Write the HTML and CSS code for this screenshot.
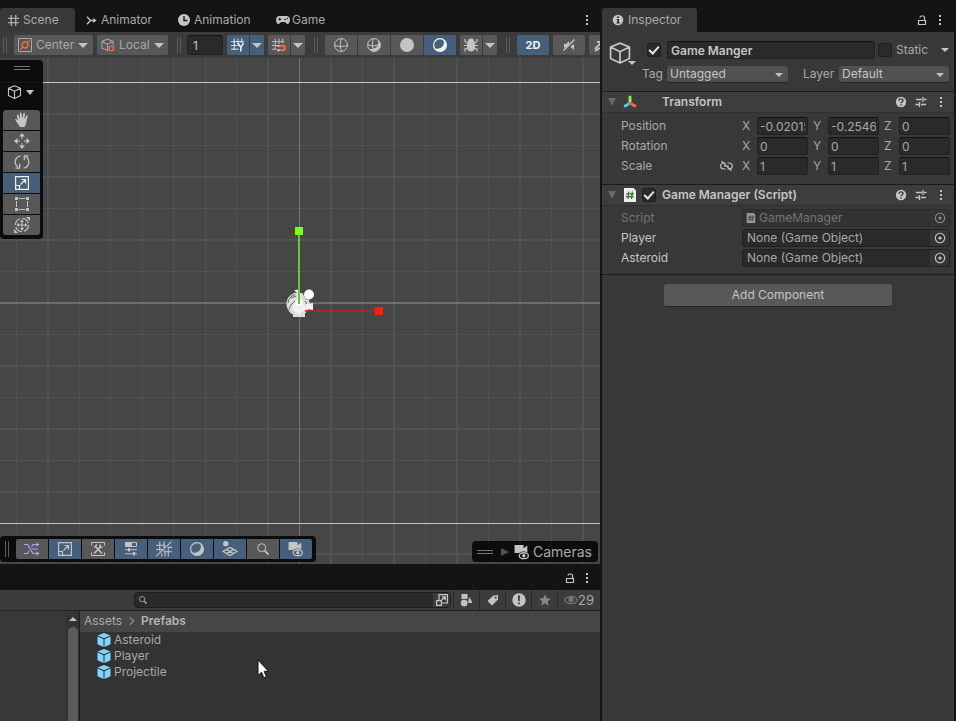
FILE: index.html
```html
<!DOCTYPE html>
<html lang="en">
<head>
<meta charset="utf-8">
<title>Scene editor</title>
<link rel="stylesheet" href="styles.css">
</head>
<body>
<svg class="defs" aria-hidden="true">
  <symbol id="i-grid" viewBox="0 0 12 12"><path d="M3.5 0v12M8.5 0v12M0 3.5h12M0 8.5h12" stroke="currentColor" fill="none" stroke-width="1.200"/></symbol>
  <symbol id="i-animator" viewBox="0 0 12 12"><path d="M1 2l4 4-4 4M5 6h5" stroke="currentColor" stroke-width="1.5" fill="none"/><path d="M8 3.2L11.5 6 8 8.8z" fill="currentColor"/></symbol>
  <symbol id="i-clock" viewBox="0 0 12 12"><circle cx="6" cy="6" r="6" fill="currentColor"/><path d="M6 2v4.5h3.5" stroke="#141414" stroke-width="1.4" fill="none"/></symbol>
  <symbol id="i-pad" viewBox="0 0 14 10"><path d="M3.5 1h7a3.5 3.5 0 0 1 3.4 4C13.7 7.500 13 9 11.600 9 10.300 9 9.700 7 8.500 7h-3C4.300 7 3.700 9 2.400 9 1 9 .3 7.500.1 5a3.500 3.500 0 0 1 3.400-4z" fill="currentColor"/><path d="M2.300 4.200h3M3.800 2.700v3" stroke="#141414"/><circle cx="9" cy="4.500" r=".8" fill="#141414"/><circle cx="11.300" cy="3.500" r=".8" fill="#141414"/></symbol>
  <symbol id="i-dots" viewBox="0 0 4 12"><path d="M1 1h2v2H1zM1 5h2v2H1zM1 9h2v2H1z" fill="currentColor"/></symbol>
  <symbol id="i-lock" viewBox="0 0 10 12"><path d="M1.500 6.500h7v4h-7zM7.500 6.500V3.500a1.500 1.500 0 0 0-1.500-1.500H4.500a1.500 1.500 0 0 0-1.500 1.500" stroke="currentColor" fill="none" stroke-width="1.200"/></symbol>
  <symbol id="i-info" viewBox="0 0 12 12"><circle cx="6" cy="6" r="5.300" fill="currentColor"/><path d="M5 2.400h2v1.600H5zM4.600 5H7v3.200h.6v1.200H4.500V8.200h.7V6.100h-.6z" fill="#333"/></symbol>
  <symbol id="i-pivot" viewBox="0 0 14 14"><path d="M.5.5h13v13H.5z" fill="none" stroke="currentColor"/><path d="M2.500 11.500l2.300-2.300M9.200 4.800l2.300-2.300" stroke="#ff6b3d" stroke-width="1.200"/><circle cx="7" cy="7" r="3" fill="none" stroke="#ff6b3d" stroke-width="1.300"/></symbol>
  <symbol id="i-cube" viewBox="0 0 14 14"><path d="M7 .7l6 2.500v7.300L7 13.400 1 10.500V3.200zM1 3.200l6 3 6-3M7 6.200v7.200" fill="none" stroke="currentColor" stroke-width="1.100" stroke-linejoin="round"/></symbol>
  <symbol id="i-local" viewBox="0 0 15 14"><path d="M7.500 13L1 10.500V3.200L7 .7l6 2.500v4M1 3.200l6 3 6-3M7 6.200V13" fill="none" stroke="currentColor" stroke-width="1.100"/><circle cx="11" cy="10.700" r="2.500" fill="#585858" stroke="#ff6b3d" stroke-width="1.300"/></symbol>
  <symbol id="i-gridy" viewBox="0 0 15 14"><path d="M3.500 0v12M7.500 0v6M11.500 0v5M0 3.500h14M0 7.500h8M0 11.500h8" stroke="currentColor"/><path d="M7.500 5l3 4.500L13.500 5M10.500 9.500V14" fill="none" stroke="currentColor" stroke-width="1.700"/></symbol>
  <symbol id="i-snap" viewBox="0 0 15 14"><path d="M3.500 0v12M7.500 0v6M11.500 0v5M0 3.500h13M0 7.500h6M0 11.500h5" stroke="currentColor"/><path d="M8 8h3.500a2.300 2.300 0 0 1 0 4.600H8" fill="none" stroke="#ff6b3d" stroke-width="2"/><path d="M6 7h2v2H6zM6 11.600h2v2H6z" fill="#eee"/></symbol>
  <symbol id="i-wire" viewBox="0 0 14 14"><circle cx="7" cy="7" r="6.400"/><path d="M.6 7.500c4 1.200 9 1.200 12.800 0M7.500.6c-1.600 4-1.600 9 0 12.800"/></symbol>
  <symbol id="i-shadewire" viewBox="0 0 14 14"><path d="M10.500 1.700C13.500 8 8 12 2 10.800 7 16 14 12 13.500 6.500 13.300 4 12 2.500 10.500 1.700z" fill="currentColor" stroke="none"/><circle cx="7" cy="7" r="6.400"/><path d="M.6 6.500c3 1.800 8 1.800 10.800 0M6.500.6c-1.600 3-1.600 8 0 10.800"/></symbol>
  <symbol id="i-ball" viewBox="0 0 14 14"><circle cx="7" cy="7" r="7" fill="currentColor"/></symbol>
  <symbol id="i-shade" viewBox="0 0 14 14"><circle cx="7" cy="7" r="6.400" fill="none" stroke="currentColor" stroke-width="1.200"/><path d="M10 1.500C13 7 8 12 2 10.500 5 15 13 14 13.600 7.500 13.600 5 12 2.500 10 1.500z" fill="currentColor"/></symbol>
  <symbol id="i-bug" viewBox="0 0 14 14"><path d="M4 3a3 2.600 0 0 1 6 0l1 2v5c0 2-2 3.500-4 3.500S3 12 3 10V5z" fill="currentColor"/><path d="M3.500 5L1 3.500V1M10.500 5L13 3.500V1M3 7.500H0M11 7.500h3M3.500 10L1 11v2.500M10.500 10l2.500 1v2.500" stroke="currentColor" stroke-width="1.200" fill="none"/></symbol>
  <symbol id="i-mute" viewBox="0 0 14 14"><path d="M2 6h2l3-3v3L4 9.500H2zM8.500 8.500L12 6v6z" fill="currentColor"/><path d="M1.500 12.500l11-11" stroke="currentColor" stroke-width="1.400"/></symbol>
  <symbol id="i-fx" viewBox="0 0 14 14"><path d="M1 11l7-7M3 4h6v6M1 13l5-3" stroke="currentColor" stroke-width="1.800" fill="none"/></symbol>
  <symbol id="i-hand" viewBox="0 0 14 16"><path d="M5 15L1.500 10 0 7.300c.8-.8 1.600-.2 2.700 1.200L2 3.300c0-1.100 1.300-1.200 1.600-.2L4.700 7 4.900 1.300c.1-1.100 1.600-1.100 1.700 0L7 7 8.300 1.700c.4-1 1.700-.7 1.600.4L9.400 7.400l1.800-3.700c.6-.9 1.700-.4 1.400.7L11.500 9c-.4 2.700-.8 4.500-2 6z" fill="currentColor"/></symbol>
  <symbol id="i-move" viewBox="0 0 16 16"><path d="M8 2v4M8 10v4M2 8h4M10 8h4" stroke="currentColor"/><path d="M8 0l3 3.500H5zM8 16l3-3.500H5zM0 8l3.500-3v6zM16 8l-3.500-3v6z" fill="currentColor"/></symbol>
  <symbol id="i-rotate" viewBox="0 0 16 16"><path d="M6.500 1.800C0 3 0 10.500 4 13M9.500 14.200C16 13 16 5.500 12 3" fill="none" stroke="currentColor" stroke-width="1.300"/><path d="M1.500 14.200h4.200V9.800M14.500 1.800h-4.200v4.400" fill="none" stroke="currentColor" stroke-width="1.300"/></symbol>
  <symbol id="i-scale" viewBox="0 0 14 14"><path d="M.6.6h12.800v12.800H.6zM.6 9.500h3.900v3.900M5.500 8.500l5-5M6.500 3.500h4v4" fill="none" stroke="currentColor" stroke-width="1.200"/></symbol>
  <symbol id="i-open" viewBox="0 0 12 12"><path d="M3 6V.6h8.400V9H6M.6 6.600h4.800v4.800H.6zM5.500 6L9 3M6 2.800h3.200V6" fill="none" stroke="currentColor" stroke-width="1.200"/></symbol>
  <symbol id="i-rect" viewBox="0 0 14 14"><path d="M1.500 4v6M12.500 4v6M4 1.500h6M4 12.500h6" stroke="currentColor"/><path d="M0 0h3v3H0zM11 0h3v3h-3zM0 11h3v3H0zM11 11h3v3h-3z" fill="currentColor"/></symbol>
  <symbol id="i-multi" viewBox="0 0 16 16"><circle cx="8" cy="8" r="6.500" fill="none" stroke="currentColor" stroke-width="1.200" stroke-dasharray="8 2"/><path d="M8 4v8M4 8h8" stroke="currentColor"/><path d="M8 2.500l2 2.500H6zM8 13.500l2-2.500H6zM2.500 8L5 6v4zM13.500 8L11 6v4zM16 0v4l-4-4zM0 16v-4l4 4z" fill="currentColor"/></symbol>
  <symbol id="i-shuffle" viewBox="0 0 16 14"><path d="M0 2.500h3.500l5.500 9h5M0 11.500h3.500L5 9M7.500 5L9 2.500h5M8 7h6" stroke="currentColor" stroke-width="1.200" fill="none"/><path d="M12.500.3l3 2.200-3 2.200zM12.500 9.300l3 2.200-3 2.200z" fill="currentColor"/></symbol>
  <symbol id="i-tools" viewBox="0 0 14 14"><path d="M.5 3.500v-3h13v3M.5 10.500v3h13v-3" stroke="currentColor" fill="none"/><path d="M3 11.500l7-7M4.500 4.500l6.500 7" stroke="currentColor" stroke-width="1.600"/><path d="M3 5.500L6 2.500M9 2.500v2.500h2.500" stroke="currentColor" stroke-width="1.500" fill="none"/></symbol>
  <symbol id="i-settings" viewBox="0 0 14 14"><path d="M1.500.5h11v4h-11z" fill="none" stroke="currentColor"/><path d="M2 1h6v3.500H2zM4 6h2v3.500H4zM9 10h2v3.500H9z" fill="currentColor"/><path d="M1 7.700h12M1 11.800h12" stroke="currentColor"/></symbol>
  <symbol id="i-gridcut" viewBox="0 0 15 14"><path d="M3.500 0v9M7.500 0v6M11.500 5v9M8.500 8v6M5.500 11v3M0 3.500h9M0 7.500h6M7 9.500h8M11 5.500h4M14.500 0L0 14" stroke="currentColor"/></symbol>
  <symbol id="i-layers" viewBox="0 0 15 15"><circle cx="3.500" cy="2.500" r="2.500" fill="currentColor"/><path d="M7.500 6l6.500 3.800-6.500 3.900L1 9.800zM4.300 7.900l6.500 3.900M10.700 7.900l-6.500 3.900" fill="none" stroke="currentColor" stroke-width="1.200"/></symbol>
  <symbol id="i-search" viewBox="0 0 12 12"><circle cx="4.700" cy="4.700" r="4" fill="none" stroke="currentColor"/><path d="M7.800 7.800l3.700 3.700" stroke="currentColor" stroke-width="1.800"/></symbol>
  <symbol id="i-camera" viewBox="0 0 14 15"><path d="M0 1h8.500v3L12 1.500v7H0z" fill="currentColor"/><ellipse cx="8.500" cy="11" rx="5.500" ry="4" fill="var(--under)"/><ellipse cx="8.700" cy="11" rx="4.300" ry="2.800" fill="none" stroke="currentColor" stroke-width="1.200"/><circle cx="8.700" cy="11" r="1.600" fill="currentColor"/></symbol>
  <symbol id="i-help" viewBox="0 0 12 12"><circle cx="6" cy="6" r="5.200" fill="currentColor"/><path d="M4 4.800C4 2.200 8 2.300 8 4.600 8 6 6 6 6 7.200M6 8.200v1.400" fill="none" stroke="#383838" stroke-width="1.400"/></symbol>
  <symbol id="i-preset" viewBox="0 0 12 12"><path d="M1 3.500h6M9 3.500h2.500M8 1v5M.5 8.500H4M6 8.500h5M4.500 6v5" stroke="currentColor" stroke-width="1.300" fill="none"/></symbol>
  <symbol id="i-unlink" viewBox="0 0 13 10"><path d="M5.500 2H3.700a3 3 0 0 0 0 6h1.800M7.500 2h1.800a3 3 0 0 1 0 6H7.500M4 5h5M1.500 0l10 10" fill="none" stroke="currentColor" stroke-width="1.100"/></symbol>
  <symbol id="i-axes" viewBox="0 0 14 14"><path d="M7 6.500V2" stroke="#a4e04a" stroke-width="3" stroke-linecap="round"/><path d="M5.500 9L2 11" stroke="#62c8f4" stroke-width="2.600" stroke-linecap="round"/><path d="M8.500 9L12 11" stroke="#ff6b3d" stroke-width="2.600" stroke-linecap="round"/></symbol>
  <symbol id="i-script" viewBox="0 0 12 14"><path d="M0 0h9.500L12 2.500V14H0z" fill="currentColor"/><path d="M4.700 3.500L4 11M8.300 3.500L7.600 11M2 5.800h8M1.800 8.700h8" stroke="#2f7b35" stroke-width="1.300"/></symbol>
  <symbol id="i-script-off" viewBox="0 0 12 14"><path d="M0 0h9.500L12 2.500V14H0z" fill="currentColor"/><path d="M4.700 3.500L4 11M8.300 3.500L7.600 11M2 5.800h8M1.800 8.700h8" stroke="#3a5a40" stroke-width="1.500"/></symbol>
  <symbol id="i-target" viewBox="0 0 12 12"><circle cx="6" cy="6" r="4.700" fill="none" stroke="currentColor" stroke-width="1.100"/><circle cx="6" cy="6" r="1.600" fill="currentColor"/></symbol>
  <symbol id="i-types" viewBox="0 0 12 13"><path d="M1 0h6v5H1zM9 3l3 6H7z" fill="currentColor"/><circle cx="3.700" cy="9" r="4" fill="currentColor" stroke="#3c3c3c"/></symbol>
  <symbol id="i-label" viewBox="0 0 12 12"><path d="M6.500 1.500L11 1v4.500L5 11.500.5 7z" fill="currentColor"/><circle cx="8.700" cy="3.600" r="1.100" fill="#3c3c3c"/></symbol>
  <symbol id="i-alert" viewBox="0 0 14 14"><circle cx="7" cy="7" r="6.700" fill="currentColor"/><path d="M5.900 2.500h2.200L7.700 8.300H6.300zM6.100 9.500h1.800v1.800H6.100z" fill="#3c3c3c"/></symbol>
  <symbol id="i-star" viewBox="0 0 12 12"><path d="M6 0l1.700 4.200 4.300.3L8.700 7.300l1.100 4.400L6 9.300l-3.800 2.400 1.100-4.400L0 4.500l4.300-.3z" fill="currentColor"/></symbol>
  <symbol id="i-eye" viewBox="0 0 14 10"><path d="M.6 5C3 .2 11 .2 13.400 5 11 9.800 3 9.800.6 5z" fill="none" stroke="currentColor" stroke-width="1.200"/><circle cx="7" cy="4.500" r="2.700" fill="currentColor"/></symbol>
  <symbol id="i-prefab" viewBox="0 0 13 14"><path d="M6.500 0L13 2.500 6.500 5.300 0 2.500zM0 3.600l6 2.600V14l-6-2.700zM13 3.600L7 6.200V14l6-2.700z" fill="#7fd6fd"/></symbol>
</svg>

<div class="editor">
  <main class="scene">
    <nav class="tabs">
      <button class="tab tab-active"><svg class="s11"><use href="#i-grid"/></svg>Scene</button>
      <button class="tab tab-animator"><svg class="s11"><use href="#i-animator"/></svg>Animator</button>
      <button class="tab tab-animation"><svg class="s12"><use href="#i-clock"/></svg>Animation</button>
      <button class="tab tab-game"><svg class="s14 pad"><use href="#i-pad"/></svg>Game</button>
      <span class="grow"></span>
      <button class="bare" aria-label="Scene menu"><svg class="dots"><use href="#i-dots"/></svg></button>
    </nav>
    <div class="toolbar">
      <i class="grip"></i>
      <button class="btn pivot"><svg class="s14"><use href="#i-pivot"/></svg>Center<i class="caret"></i></button>
      <button class="btn local"><svg class="s14"><use href="#i-local"/></svg>Local<i class="caret"></i></button>
      <i class="grip grip-mid"></i>
      <input class="field grid-size" aria-label="Grid size" value="1">
      <div class="split"><button class="btn on" aria-label="Grid axis"><svg class="s14"><use href="#i-gridy"/></svg></button><button class="btn on drop" aria-label="Grid options"><i class="caret"></i></button></div>
      <div class="split"><button class="btn" aria-label="Snap"><svg class="s14"><use href="#i-snap"/></svg></button><button class="btn drop" aria-label="Snap options"><i class="caret"></i></button></div>
      <i class="grip grip-late"></i>
      <div class="split wide">
        <button class="btn" aria-label="Wireframe"><svg class="s14 line"><use href="#i-wire"/></svg></button>
        <button class="btn" aria-label="Shaded wireframe"><svg class="s14 line"><use href="#i-shadewire"/></svg></button>
        <button class="btn" aria-label="Unlit"><svg class="s14"><use href="#i-ball"/></svg></button>
        <button class="btn on" aria-label="Shaded"><svg class="s14"><use href="#i-shade"/></svg></button>
      </div>
      <div class="split"><button class="btn" aria-label="Debug view"><svg class="s14"><use href="#i-bug"/></svg></button><button class="btn drop" aria-label="Debug options"><i class="caret"></i></button></div>
      <i class="grip grip-late"></i>
      <button class="btn w32 on two-d">2D</button>
      <button class="btn w32" aria-label="Audio"><svg class="s14"><use href="#i-mute"/></svg></button>
      <button class="btn w32 effects" aria-label="Effects"><svg class="s14"><use href="#i-fx"/></svg></button>
    </div>
    <div class="viewport">
      <svg class="canvas" viewBox="0 0 600 506" preserveAspectRatio="xMinYMin slice" aria-label="Scene view">
        <g stroke="#525252">
          <path d="M16.500 0v506M79.500 0v506M110.500 0v506M142.500 0v506M173.500 0v506M205.500 0v506M236.500 0v506M362.500 0v506M425.500 0v506M488.500 0v506M551.500 0v506M0 24.500h600M0 87.500h600M0 150.500h600M0 213.500h600M0 276.500h600M0 339.500h600M0 402.500h600M0 465.500h600"/>
          <path stroke-width="2" d="M48 0v506M268 0v506M331 0v506M394 0v506M457 0v506M520 0v506M583 0v506M0 56h600M0 119h600M0 182h600M0 308h600M0 371h600M0 434h600M0 496h600"/>
        </g>
        <path d="M299.500 0v506" stroke="#727272"/>
        <path d="M0 245h600" stroke="#6e6e6e" stroke-width="2"/>
        <path d="M0 24.500h600M0 465.500h600" stroke="#c4c4c4"/>
        <circle cx="298" cy="246" r="11.500" fill="#dedede"/>
        <path d="M288 245a10 10 0 0 1 7-8.500M289 252c1-5 4-8 7-9M291 240l5-2M303 236l4 6M305 243l3 5" stroke="#666" fill="none"/>
        <path d="M295 243a5 5 0 0 1 8 0v5h-8z" fill="#fff"/>
        <path d="M294 232.500l6-1.500-1 5z" fill="#f4f4f4"/>
        <circle cx="309" cy="236.500" r="5" fill="#fff"/>
        <path d="M306 246l7-1v7l-7-1zM293 247h12v12h-12z" fill="#f1f1f1"/>
        <path d="M293 252l6 5 6-5v7h-12z" fill="#dcdcdc"/>
        <path d="M305 253h71" stroke="#b9261c" stroke-width="1.600"/>
        <path d="M375 249h8v8h-8z" fill="#ff1c0c"/>
        <path d="M299 176v70" stroke="#69c43a" stroke-width="2"/>
        <path d="M295 169h8v8h-8z" fill="#77ff1e"/>
      </svg>
      <div class="overlay tools">
        <i class="handle"></i>
        <button class="bare mode" aria-label="Tool context"><svg class="s14"><use href="#i-cube"/></svg><i class="caret"></i></button>
        <div class="stack">
          <button class="btn" aria-label="Hand"><svg class="s15"><use href="#i-hand"/></svg></button>
          <button class="btn" aria-label="Move"><svg class="s15"><use href="#i-move"/></svg></button>
          <button class="btn" aria-label="Rotate"><svg class="s15"><use href="#i-rotate"/></svg></button>
          <button class="btn on" aria-label="Scale"><svg class="s14"><use href="#i-scale"/></svg></button>
          <button class="btn" aria-label="Rect"><svg class="s14"><use href="#i-rect"/></svg></button>
          <button class="btn" aria-label="Transform"><svg class="s15"><use href="#i-multi"/></svg></button>
        </div>
      </div>
      <div class="overlay dock">
        <i class="grip"></i>
        <div class="split wide dim">
          <button class="btn violet" aria-label="Shuffle"><svg class="s15"><use href="#i-shuffle"/></svg></button>
          <button class="btn on" aria-label="Tools overlay"><svg class="s14"><use href="#i-scale"/></svg></button>
          <button class="btn" aria-label="Component tools"><svg class="s14"><use href="#i-tools"/></svg></button>
          <button class="btn on" aria-label="Tool settings"><svg class="s14"><use href="#i-settings"/></svg></button>
          <button class="btn on" aria-label="Grid and snap"><svg class="s15"><use href="#i-gridcut"/></svg></button>
          <button class="btn on" aria-label="Draw modes"><svg class="s14"><use href="#i-shade"/></svg></button>
          <button class="btn on" aria-label="View options"><svg class="s15"><use href="#i-layers"/></svg></button>
          <button class="btn" aria-label="Search"><svg class="s12"><use href="#i-search"/></svg></button>
          <button class="btn on" aria-label="Cameras overlay"><svg class="s15"><use href="#i-camera"/></svg></button>
        </div>
      </div>
      <div class="overlay cameras"><i class="handle"></i><i class="play"></i><svg class="s15"><use href="#i-camera"/></svg><span>Cameras</span></div>
    </div>
  </main>

  <section class="project">
    <div class="project-top">
      <button class="bare" aria-label="Lock project"><svg class="lock"><use href="#i-lock"/></svg></button>
      <button class="bare" aria-label="Project menu"><svg class="dots"><use href="#i-dots"/></svg></button>
    </div>
    <div class="project-bar">
      <div class="search"><svg class="glass"><use href="#i-search"/></svg><input type="search" aria-label="Search assets"><button class="bare" aria-label="Open search"><svg class="s12"><use href="#i-open"/></svg></button></div>
      <button class="cell" aria-label="Search by type"><svg class="s13"><use href="#i-types"/></svg></button>
      <button class="cell" aria-label="Search by label"><svg class="s12"><use href="#i-label"/></svg></button>
      <button class="cell" aria-label="Search by log"><svg class="s14"><use href="#i-alert"/></svg></button>
      <button class="cell faded" aria-label="Favorite"><svg class="s12"><use href="#i-star"/></svg></button>
      <button class="cell count"><svg class="s14 eye"><use href="#i-eye"/></svg>29</button>
    </div>
    <div class="browser">
      <div class="tree"></div>
      <div class="scroll"><i class="up"></i><i class="thumb"></i></div>
      <div class="files">
        <nav class="crumbs"><a href="#assets">Assets</a><i class="chev"></i><b>Prefabs</b></nav>
        <ul>
          <li><svg class="s14"><use href="#i-prefab"/></svg>Asteroid</li>
          <li><svg class="s14"><use href="#i-prefab"/></svg>Player</li>
          <li><svg class="s14"><use href="#i-prefab"/></svg>Projectile</li>
        </ul>
        <svg class="pointer" viewBox="0 0 12 20" aria-hidden="true"><path d="M1 1v15.500l3.500-3.300 2.300 5.500 2.600-1.100-2.300-5.300h4.400z" fill="#fff" stroke="#111"/></svg>
      </div>
    </div>
  </section>

  <aside class="inspector">
    <div class="tabs">
      <button class="tab tab-active tab-inspector"><svg class="s12"><use href="#i-info"/></svg>Inspector</button>
      <span class="grow"></span>
      <button class="bare" aria-label="Lock inspector"><svg class="lock"><use href="#i-lock"/></svg></button>
      <button class="bare" aria-label="Inspector menu"><svg class="dots"><use href="#i-dots"/></svg></button>
    </div>
    <header class="object">
      <button class="bare object-icon" aria-label="Object icon"><svg><use href="#i-cube"/></svg><i class="caret small"></i></button>
      <div class="object-rows">
        <div class="object-row">
          <input class="check" type="checkbox" checked aria-label="Active">
          <input class="field name" aria-label="Name" value="Game Manger">
          <input class="check" type="checkbox" id="static"><label class="static" for="static">Static</label>
          <i class="caret small"></i>
        </div>
        <div class="object-row tags">
          <label for="tag">Tag</label>
          <span class="select tag"><select id="tag"><option>Untagged</option></select><i class="caret small"></i></span>
          <label class="layer-label" for="layer">Layer</label>
          <span class="select layer"><select id="layer"><option>Default</option></select><i class="caret small"></i></span>
        </div>
      </div>
    </header>
    <section class="component">
      <header><i class="fold"></i><svg class="s14"><use href="#i-axes"/></svg><h2>Transform</h2><span class="icons"><svg class="s12"><use href="#i-help"/></svg><svg class="s12"><use href="#i-preset"/></svg><svg class="dots"><use href="#i-dots"/></svg></span></header>
      <div class="props">
        <div class="prop"><span>Position</span><div class="xyz"><label for="px">X</label><input class="field" id="px" value="-0.02015"><label for="py">Y</label><input class="field" id="py" value="-0.2546"><label for="pz">Z</label><input class="field" id="pz" value="0"></div></div>
        <div class="prop"><span>Rotation</span><div class="xyz"><label for="rx">X</label><input class="field" id="rx" value="0"><label for="ry">Y</label><input class="field" id="ry" value="0"><label for="rz">Z</label><input class="field" id="rz" value="0"></div></div>
        <div class="prop"><span class="linked">Scale<svg class="unlink"><use href="#i-unlink"/></svg></span><div class="xyz"><label for="sx">X</label><input class="field" id="sx" value="1"><label for="sy">Y</label><input class="field" id="sy" value="1"><label for="sz">Z</label><input class="field" id="sz" value="1"></div></div>
      </div>
    </section>
    <section class="component">
      <header><i class="fold"></i><svg class="s14 page"><use href="#i-script"/></svg><input class="check" type="checkbox" checked aria-label="Script enabled"><h2>Game Manager (Script)</h2><span class="icons"><svg class="s12"><use href="#i-help"/></svg><svg class="s12"><use href="#i-preset"/></svg><svg class="dots"><use href="#i-dots"/></svg></span></header>
      <div class="props">
        <div class="prop off"><span>Script</span><div class="ref"><svg class="mini"><use href="#i-script-off"/></svg><span>GameManager</span><button class="bare" disabled aria-label="Pick script"><svg class="s12"><use href="#i-target"/></svg></button></div></div>
        <div class="prop bright"><span>Player</span><div class="ref"><span>None (Game Object)</span><button class="bare" aria-label="Pick player"><svg class="s12"><use href="#i-target"/></svg></button></div></div>
        <div class="prop bright"><span>Asteroid</span><div class="ref"><span>None (Game Object)</span><button class="bare" aria-label="Pick asteroid"><svg class="s12"><use href="#i-target"/></svg></button></div></div>
      </div>
    </section>
    <div class="add"><button>Add Component</button></div>
  </aside>
</div>
</body>
</html>
```
FILE: styles.css
```css
:root {
  --bar: #141414;
  --panel: #383838;
  --button: #585858;
  --accent: #46607c;
  --text: #c4c4c4;
  --muted: #a8a8a8;
}
* { box-sizing: border-box; }
body {
  margin: 0;
  background: var(--bar);
  color: var(--muted);
  font: 12px/16px Inter, "Liberation Sans", sans-serif;
}
button, input, select { font: inherit; color: inherit; margin: 0; }
button { border: 0; padding: 0; }
svg { display: block; flex: none; }
.defs { position: absolute; width: 0; height: 0; }
.grow { flex: 1; }
.s11 { width: 11px; height: 11px; }
.s12 { width: 12px; height: 12px; }
.s13 { width: 13px; height: 13px; }
.s14 { width: 14px; height: 14px; }
.s15 { width: 16px; height: 16px; }
.line { fill: none; stroke: currentColor; }
.dots { width: 4px; height: 12px; }
.lock { width: 10px; height: 12px; }
.bare { background: none; display: flex; align-items: center; color: var(--text); }
.caret { border: 5px solid transparent; border-top-color: var(--text); border-bottom: 0; flex: none; }
.caret.small { border-width: 4px 4px 0; }

.editor {
  display: grid;
  grid-template-columns: 600fr 356fr;
  grid-template-rows: 564fr 157fr;
  height: 100vh;
}
.scene { display: flex; flex-direction: column; min-width: 0; min-height: 0; }
.tabs { display: flex; height: 32px; padding: 8px 11px 0 0; flex: none; background: var(--bar); }
.tab {
  display: flex;
  align-items: center;
  gap: 4px;
  padding: 0 8px;
  background: none;
  color: var(--muted);
}
.tab svg { color: var(--text); }
.tab-active { background: var(--panel); border-radius: 3px 3px 0 0; width: 75px; }
.tab-animator { width: 90px; padding-left: 11px; }
.tab-animation { width: 99px; padding-left: 13px; }
.tab-game { padding-left: 12px; gap: 2px; }
.tab-inspector { width: 95px; padding: 0 10px; }
.tabs .bare + .bare { margin-left: 11px; }
.inspector .tabs { padding-right: 12px; }

.toolbar {
  display: flex;
  gap: 4px;
  height: 26px;
  padding: 3px 0 3px 3px;
  flex: none;
  overflow: hidden;
  background: #3c3c3c;
}
.toolbar > * { flex: none; }
.grip { width: 4px; height: 16px; margin: 2px 3px 0 0; border: solid #5c5c5c; border-width: 0 1px; flex: none; }
.grip-mid { margin: 2px 2px 0 5px; }
.grip-late { margin: 2px 3px 0 5px; }
.btn {
  display: flex;
  align-items: center;
  justify-content: center;
  gap: 4px;
  height: 20px;
  border-radius: 2px;
  background: var(--button);
  color: var(--text);
}
.on { background: var(--accent); color: #f0f0f0; }
.pivot, .local { justify-content: flex-start; padding: 0 5px 0 4px; color: var(--muted); }
.pivot { width: 79px; }
.local { width: 71px; }
.pivot .caret, .local .caret { margin-left: auto; }
.w32 { width: 32px; }
.two-d { font-size: 11px; font-weight: 700; }
.effects { justify-content: flex-start; padding-left: 5px; }
.split { display: flex; gap: 1px; }
.split .btn { width: 22px; }
.split .drop { width: 14px; }
.split.wide .btn { width: 32px; }
.split .btn:not(:first-child) { border-top-left-radius: 0; border-bottom-left-radius: 0; }
.split .btn:not(:last-child) { border-top-right-radius: 0; border-bottom-right-radius: 0; }
.field {
  min-width: 0;
  height: 18px;
  padding: 0 3px;
  background: #2a2a2a;
  border: 1px solid #212121;
  border-top-color: #111;
  border-radius: 3px;
}
.toolbar .grid-size { width: 36px; height: 20px; padding: 0 5px; color: var(--text); }

.viewport { position: relative; flex: 1; min-height: 0; background: #464646; overflow: hidden; }
.canvas { width: 100%; height: 100%; }
.overlay { position: absolute; background: rgb(8 8 8 / 92%); border-radius: 4px; }
.handle { display: block; width: 16px; height: 4px; border: solid #777; border-width: 1px 0; }
.tools { top: 2px; left: 0; width: 43px; padding: 6px 3px 4px; border-top-left-radius: 0; }
.tools .handle { margin: 0 auto; }
.mode { gap: 4px; padding: 15px 0 11px 4px; }
.tools .mode .s14 { width: 15px; }
.mode .caret { border-width: 5px 4px 0; }
.stack { display: grid; gap: 1px; }
.stack .btn { border-radius: 0; width: 37px; }
.stack .btn:first-child { border-radius: 3px 3px 0 0; }
.stack .btn:last-child { border-radius: 0 0 3px 3px; }
.dock { left: 0; bottom: 2px; display: flex; padding: 3px 4px 3px 5px; --under: var(--accent); }
.dock .grip { margin: 2px 7px 0 0; }
.dim .btn { color: var(--text); }
.dim .violet { color: #b79cf7; }
.cameras { right: 2px; bottom: 2px; display: flex; align-items: center; height: 21px; padding: 0 6px 0 5px; font-size: 14px; --under: #111; }
.cameras svg { color: var(--text); margin-right: 3px; }
.play { border: 4px solid transparent; border-left: 8px solid #555; border-right: 0; margin: 0 5px 0 8px; }

.project { grid-row: 2; grid-column: 1; display: flex; flex-direction: column; min-width: 0; }
.project-top { display: flex; justify-content: flex-end; gap: 10px; height: 26px; padding: 2px 11px 0 0; flex: none; }
.project-bar { display: flex; height: 21px; background: #3c3c3c; border-bottom: 1px solid #222; flex: none; }
.search {
  display: flex;
  align-items: center;
  flex: 1;
  min-width: 0;
  height: 16px;
  margin: 2px 2px 0 134px;
  border: 1px solid #1c1c1c;
  border-radius: 4px;
  background: #2a2a2a;
}
.search input { flex: 1; min-width: 0; height: 14px; background: none; border: 0; padding: 0 4px; }
.search .bare { height: 14px; padding: 0 2px 0 3px; background: #3c3c3c; border-radius: 0 3px 3px 0; }
.glass { width: 8px; height: 8px; margin-left: 4px; color: var(--text); }
.cell { display: flex; align-items: center; justify-content: center; width: 26px; background: none; border-left: 1px solid #2a2a2a; color: var(--text); }
.faded { color: #868686; }
.count { width: 43px; color: var(--muted); font-size: 13px; }
.count .eye { color: #747474; }
.browser { display: flex; flex: 1; min-height: 0; }
.tree { width: 66px; background: var(--panel); }
.scroll { width: 14px; padding: 6px 2px 0; background: #333; border-right: 1px solid #1e1e1e; display: flex; flex-direction: column; align-items: center; gap: 6px; }
.up { border: 4px solid transparent; border-bottom: 4px solid var(--text); border-top: 0; }
.thumb { flex: 1; width: 10px; background: #5c5c5c; border-radius: 5px 5px 0 0; }
.files { flex: 1; background: #333; position: relative; }
.crumbs { display: flex; align-items: center; height: 21px; padding: 0 0 1px 4px; background: #464646; }
.crumbs a { color: inherit; text-decoration: none; }
.crumbs b { font-weight: 600; color: #b4b4b4; }
.chev { width: 6px; height: 6px; border: solid #999; border-width: 1px 1px 0 0; transform: rotate(45deg); margin: 0 8px 0 5px; }
ul { list-style: none; margin: 0; padding: 0 0 0 17px; }
li { display: flex; align-items: center; gap: 3px; height: 16px; }
.pointer { position: absolute; left: 177px; top: 48px; width: 12px; height: 20px; }

.inspector { grid-column: 2; grid-row: 1 / 3; min-width: 0; background: var(--panel); border: solid var(--bar); border-width: 0 2px; }
.object { display: flex; padding: 9px 5px 8px 7px; }
.object-icon { position: relative; width: 22px; height: 22px; margin-top: 1px; }
.object-icon svg { width: 22px; height: 22px; }
.object-icon .caret { position: absolute; right: -5px; bottom: -1px; }
.object-rows { flex: 1; min-width: 0; padding-left: 11px; }
.object-row { display: flex; align-items: center; height: 18px; }
.object-row + .object-row { margin-top: 6px; }
.object-row > .check { margin-left: 5px; }
.object-row .name + .check { margin: 0 4px 0 3px; }
.check {
  appearance: none;
  display: grid;
  place-content: center;
  width: 14px;
  height: 14px;
  flex: none;
  background: #2a2a2a;
  border: 1px solid #1e1e1e;
  border-radius: 3px;
}
.check:checked::after { content: ""; width: 8px; height: 4px; border: solid #e8e8e8; border-width: 0 0 2px 2px; transform: translateY(-1px) rotate(-48deg); }
.name { flex: 1; margin-left: 6px; font-weight: 600; color: var(--text); }
.static { width: 45px; }
.tags label { width: 25px; }
.select { position: relative; height: 17px; }
.select select { appearance: none; width: 100%; height: 17px; padding: 0 3px; background: #515151; border: 0; border-bottom: 1px solid #252525; border-radius: 3px; color: var(--text); line-height: 15px; }
.select .caret { position: absolute; right: 5px; top: 7px; }
.tag { flex: 121; }
.tags .layer-label { margin-left: 15px; width: 36px; }
.layer { flex: 110; }

.component { border-top: 1px solid #1c1c1c; padding-bottom: 9px; }
.component header { display: flex; align-items: center; height: 21px; padding: 0 11px 0 6px; background: #3d3d3d; border-bottom: 1px solid #303030; }
.fold { border: 4px solid transparent; border-top: 8px solid #696969; border-bottom: 0; margin-right: 7px; }
.component h2 { margin: 0 0 0 25px; font-size: 12px; font-weight: 600; color: var(--text); }
.component .check { margin-left: 5px; }
.component .check + h2 { margin-left: 6px; }
.page { color: #eee; }
.icons { display: flex; gap: 8px; margin-left: auto; color: var(--text); }
.icons .dots { margin-left: 4px; }
.props { display: grid; gap: 2px; padding: 4px 4px 0 19px; }
.component + .component { padding-bottom: 7px; }
.component + .component .props { padding-top: 3px; }
.prop { display: grid; grid-template-columns: 121fr 208fr; align-items: center; height: 18px; }
.linked { display: flex; justify-content: space-between; align-items: center; padding-right: 9px; }
.unlink { width: 13px; height: 10px; color: var(--text); }
.xyz { display: grid; grid-template-columns: 15px 1fr 20px 1fr 20px 1fr; min-width: 0; }
.xyz label { line-height: 18px; }
.xyz label:nth-of-type(n + 2) { padding-left: 5px; }
.xyz input { width: 100%; padding: 0 2px; }
.ref { display: flex; align-items: center; min-width: 0; height: 18px; padding-left: 4px; background: #2a2a2a; border: 1px solid #212121; border-radius: 3px; overflow: hidden; }
.ref > span { flex: 1; }
.ref .bare { width: 19px; height: 16px; padding-left: 4px; background: #353535; }
.off { color: #737373; }
.off .ref { background: #323232; border-color: #2c2c2c; padding-left: 3px; }
.off .bare { color: #858585; }
.mini { width: 10px; height: 10px; margin-right: 3px; color: #969696; }
.bright > span { color: var(--text); }
.add { border-top: 1px solid #1c1c1c; padding-top: 9px; text-align: center; }
.add button { width: 65%; height: 23px; background: var(--button); border-bottom: 1px solid #242424; border-radius: 3px; color: var(--text); }
```
